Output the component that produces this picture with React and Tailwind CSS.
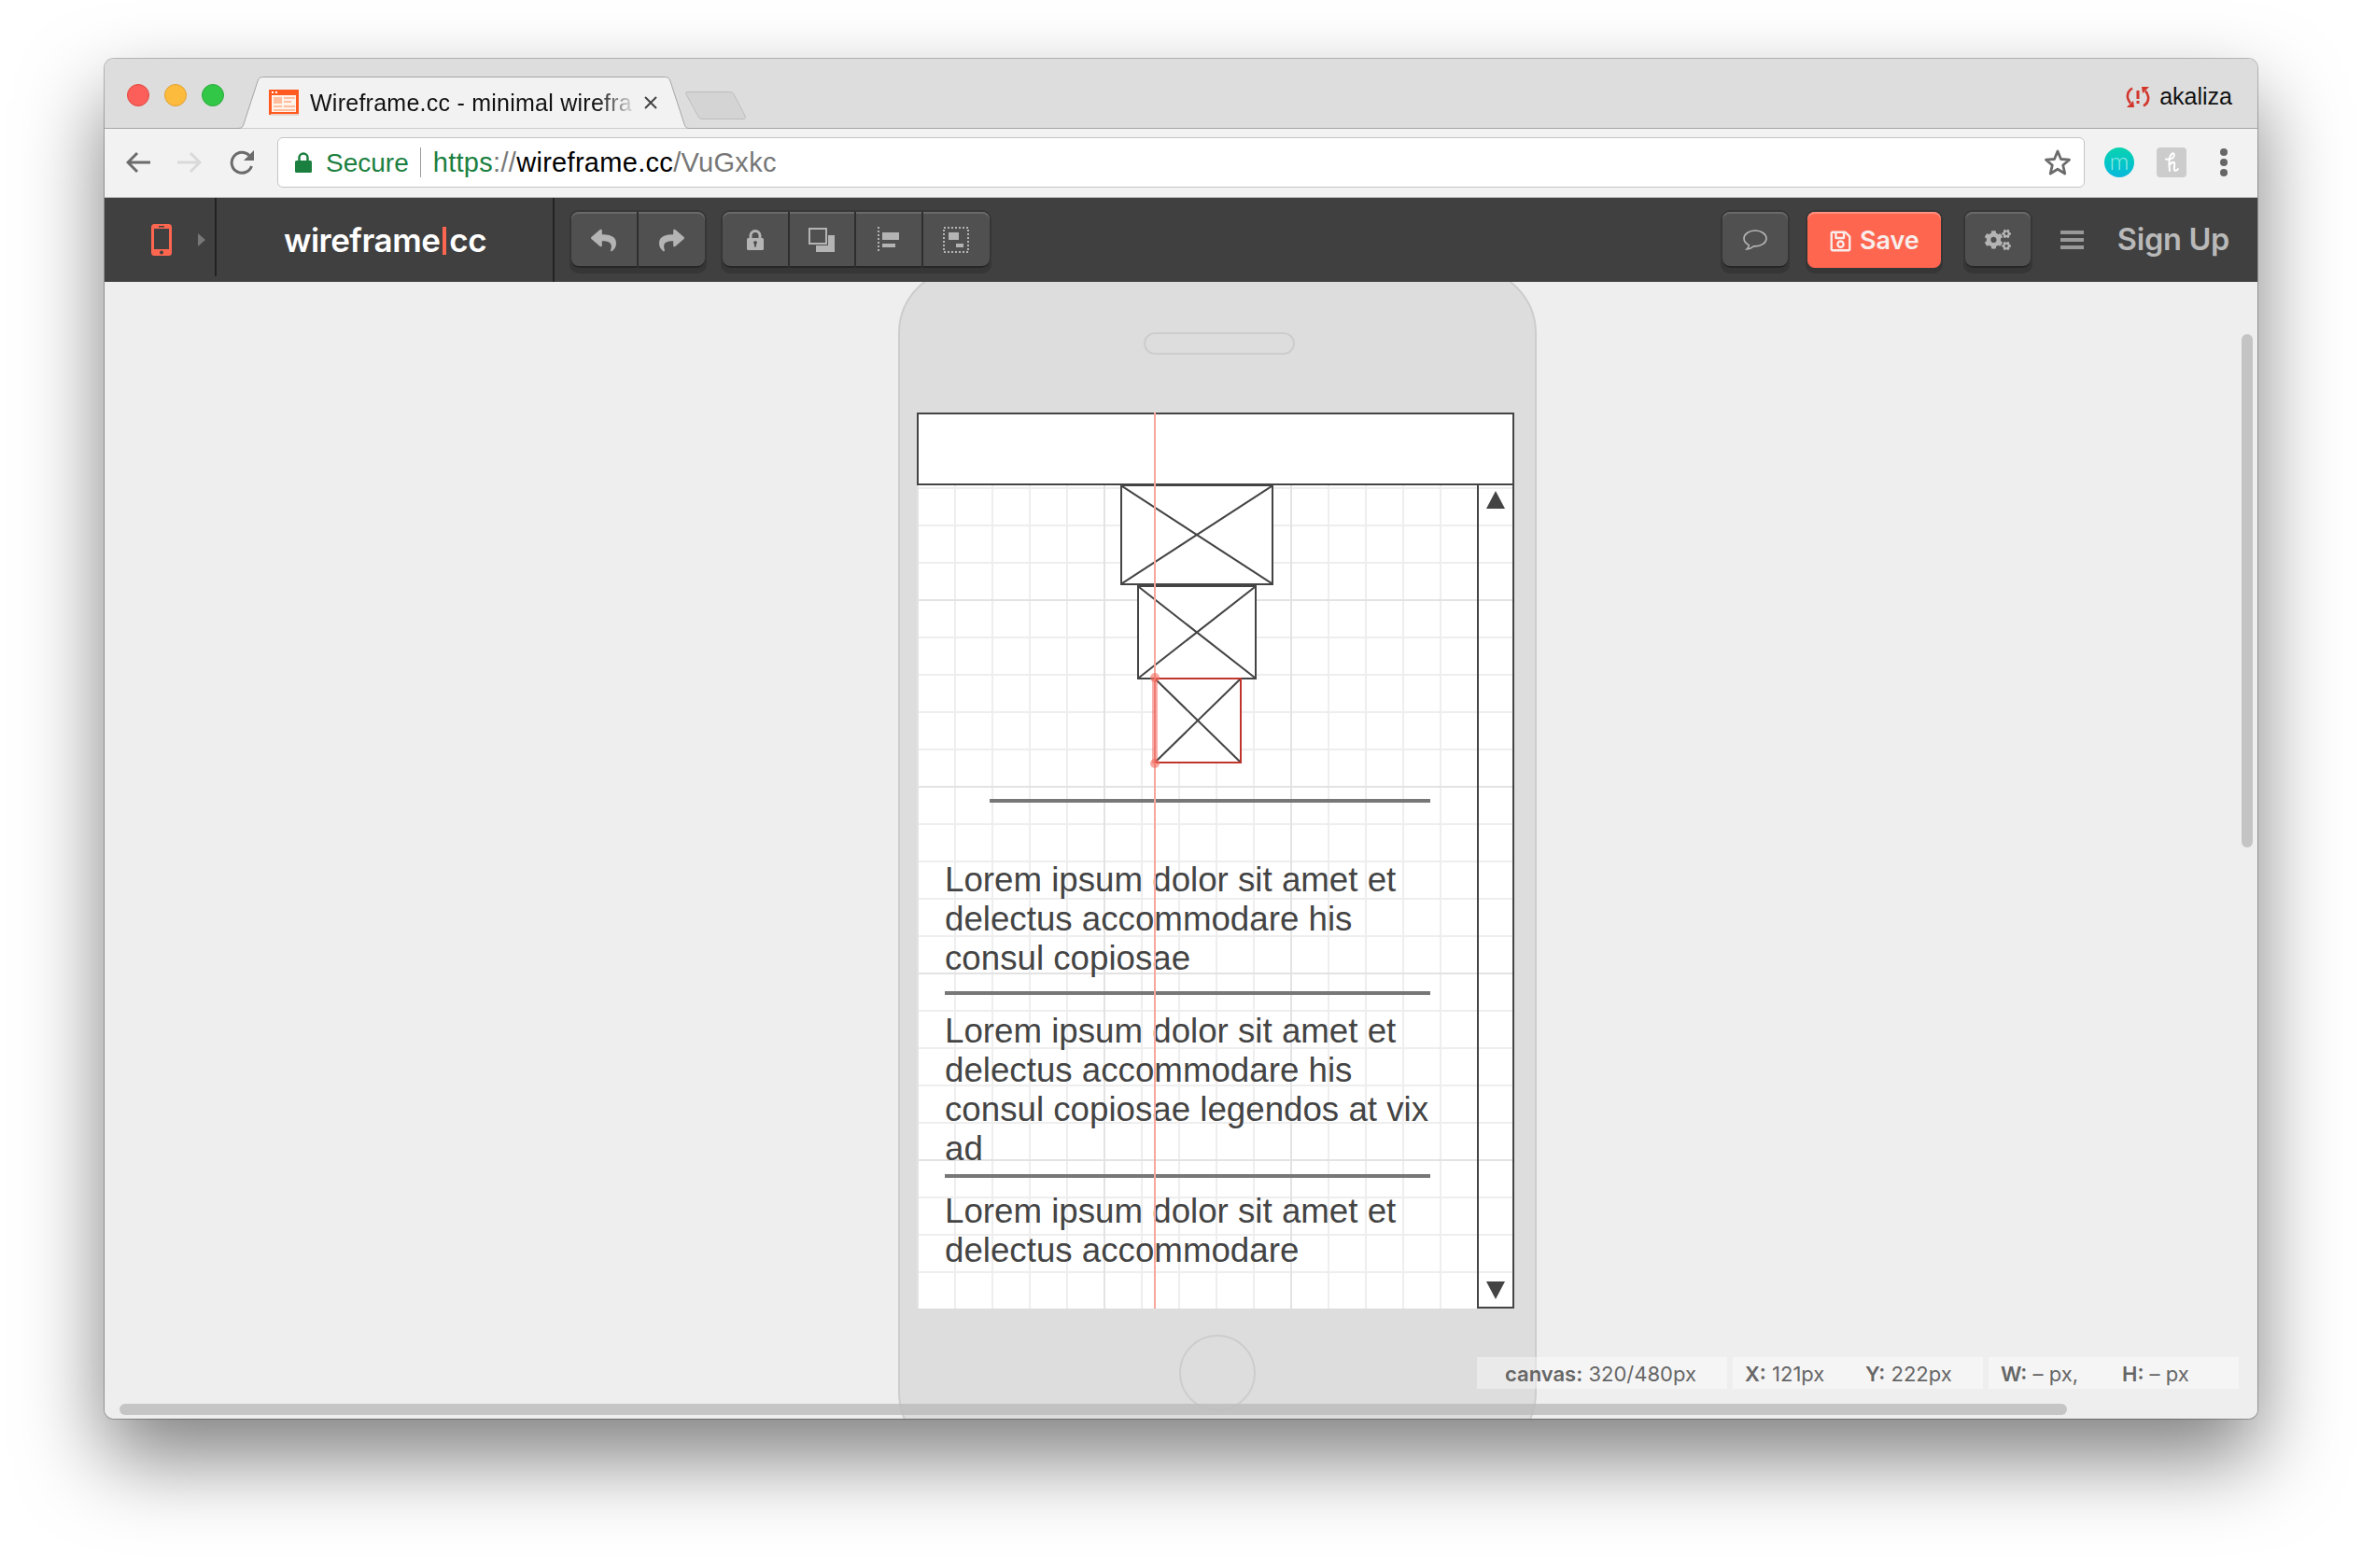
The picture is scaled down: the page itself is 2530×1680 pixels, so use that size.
import { FaReply, FaShare, FaCogs, FaRegSave } from "react-icons/fa";

const TrafficLights = () => (
  <div className="flex gap-4 ml-6 mt-[27px] self-start">
    <div className="w-6 h-6 rounded-full bg-[#fc5f5a] border border-[#e2463f]" />
    <div className="w-6 h-6 rounded-full bg-[#fdbb3e] border border-[#e1a02f]" />
    <div className="w-6 h-6 rounded-full bg-[#33c748] border border-[#2aac3b]" />
  </div>
);

const Favicon = () => (
  <svg width="32" height="28" viewBox="0 0 32 28" className="shrink-0">
    <rect x="2" y="2" width="28" height="23" fill="#fff3ea" />
    <rect x="1.5" y="1.5" width="29" height="24" fill="none" stroke="#ff5a1f" strokeWidth="3" />
    <rect x="0" y="0" width="32" height="6" fill="#ff5a1f" />
    <rect x="3" y="2" width="2" height="2" fill="#fff" />
    <rect x="7" y="2" width="2" height="2" fill="#fff" />
    <rect x="5" y="8" width="9" height="7" fill="#ffbf9f" />
    <rect x="16" y="8" width="12" height="2" fill="#ffbf9f" />
    <rect x="16" y="12" width="8" height="2" fill="#ffbf9f" />
    <rect x="5" y="17" width="9" height="2" fill="#ffbf9f" />
    <rect x="16" y="17" width="12" height="2" fill="#ffbf9f" />
    <rect x="5" y="21" width="23" height="2" fill="#ffbf9f" />
    <rect x="2" y="26" width="30" height="2" fill="#e6d5cb" />
  </svg>
);

const Tab = () => (
  <div className="relative w-[484px] h-[56px] ml-[15px] self-end -mb-px shrink-0">
    <svg className="absolute inset-0" width="484" height="56" viewBox="0 0 484 56">
      <path d="M0 55.5 C4 55.5 5 54 6 51 L21 5 C22 2 23 0.5 28 0.5 L456 0.5 C461 0.5 462 2 463 5 L478 51 C479 54 480 55.5 484 55.5 Z" fill="#f2f2f2" />
      <path d="M0 55.5 C4 55.5 5 54 6 51 L21 5 C22 2 23 0.5 28 0.5 L456 0.5 C461 0.5 462 2 463 5 L478 51 C479 54 480 55.5 484 55.5" fill="none" stroke="#a5a5a5" />
    </svg>
    <div className="relative flex items-center h-full pl-[33px]">
      <Favicon />
      <div className="ml-[12px] w-[350px] whitespace-nowrap text-[25px] leading-[32px] tracking-[0.25px] text-[#111] [mask-image:linear-gradient(to_right,black_88%,transparent)]">
        Wireframe.cc - minimal wirefra
      </div>
      <svg width="16" height="16" viewBox="0 0 16 16" className="ml-[7px] shrink-0">
        <path d="M2 2 L14 14 M14 2 L2 14" stroke="#444" strokeWidth="2" />
      </svg>
    </div>
  </div>
);

const NewTab = () => (
  <svg width="66" height="32" viewBox="0 0 66 32" className="self-start mt-[34px] -ml-[5px] shrink-0">
    <path d="M2 1.5 L48 1.5 Q51 1.5 52 4 L64 27 Q65.5 30.5 62 30.5 L18 30.5 Q15 30.5 14 28 L1 4 Q0 1.5 2 1.5 Z" fill="#d4d4d4" stroke="#bdbdbd" />
  </svg>
);

const SyncIcon = () => (
  <svg width="26" height="24" viewBox="0 0 26 24" fill="none" className="shrink-0">
    <path d="M7 2.5 C3 5 1.500 9 2 12.500 C2.500 15 3.500 17 5 18.500" stroke="#d2362c" strokeWidth="2.600" />
    <path d="M1 23 L9 23 L8 16 Z" fill="#d2362c" />
    <path d="M19 21.500 C23 19 24.500 15 24 11.500 C23.500 9 22.500 7 21 5.500" stroke="#d2362c" strokeWidth="2.600" />
    <path d="M25 1 L17 1 L18 8 Z" fill="#d2362c" />
    <rect x="11.500" y="5" width="3" height="9" fill="#d2362c" />
    <rect x="11.500" y="16" width="3" height="3" fill="#d2362c" />
  </svg>
);

const TitleBar = () => (
  <div className="flex h-[75px] shrink-0 bg-[#dddddd] border-b border-[#a5a5a5]">
    <TrafficLights />
    <Tab />
    <NewTab />
    <div className="ml-auto flex items-center gap-[10px] pr-[27px] pt-[7px]">
      <SyncIcon />
      <span className="text-[25px] text-[#111]">akaliza</span>
    </div>
  </div>
);

const NavIcons = () => (
  <div className="flex items-center gap-[29px] ml-[23px]">
    <svg width="26" height="24" viewBox="0 0 26 24" fill="none" stroke="#6b6b6b" strokeWidth="3">
      <path d="M26 12 H3 M12 2 L2 12 L12 22" />
    </svg>
    <svg width="26" height="24" viewBox="0 0 26 24" fill="none" stroke="#d9d9d9" strokeWidth="3">
      <path d="M0 12 H23 M14 2 L24 12 L14 22" />
    </svg>
    <svg width="28" height="28" viewBox="0 0 28 28" fill="none" className="ml-[1px]">
      <path d="M23.500 18 A11 11 0 1 1 21 6.500" stroke="#6b6b6b" strokeWidth="3" />
      <path d="M26 1 V12 H15 Z" fill="#6b6b6b" />
    </svg>
  </div>
);

const AddressBar = () => (
  <div className="flex items-center ml-[23px] w-[1936px] h-[54px] bg-white border border-[#c4c4c4] rounded-[6px] pl-[18px] pr-[13px]">
    <svg width="18" height="22" viewBox="0 0 18 22" className="shrink-0">
      <path d="M4.500 10 V6 A4.500 4.500 0 0 1 13.500 6 V10" fill="none" stroke="#1b7f3f" strokeWidth="2.500" />
      <rect x="0" y="9" width="18" height="13" rx="1.500" fill="#1b7f3f" />
    </svg>
    <span className="ml-[15px] pt-[1px] text-[28px] text-[#1b7f3f]">Secure</span>
    <div className="ml-[12px] w-px h-[32px] bg-[#9a9a9a]" />
    <span className="ml-[13px] pt-[1px] text-[29px] tracking-[0.3px] text-[#777] whitespace-nowrap">
      <span className="text-[#1b7f3f]">https</span>://<span className="text-black">wireframe.cc</span>/VuGxkc
    </span>
    <svg width="30" height="30" viewBox="0 0 30 30" className="ml-auto" fill="none">
      <path d="M15 3 L18.500 11.500 L27.500 12.200 L20.700 18 L22.800 27 L15 22.200 L7.200 27 L9.300 18 L2.500 12.200 L11.500 11.500 Z" stroke="#6b6b6b" strokeWidth="2.800" strokeLinejoin="round" />
    </svg>
  </div>
);

const Extensions = () => (
  <div className="flex items-center">
    <div className="ml-[21px] w-8 h-8 rounded-full bg-gradient-to-b from-[#0cd3ae] to-[#0bb8dc] flex items-center justify-center text-[26px] leading-none text-[#8fe9e4] font-['Lato',sans-serif] font-light pb-[4px]">
      m
    </div>
    <div className="ml-[24px] w-8 h-8 rounded-[4px] bg-[#cccccc] flex items-center justify-center">
      <svg width="18" height="24" viewBox="0 0 18 24" fill="none" stroke="#fff" strokeWidth="2" strokeLinecap="round">
        <path d="M7 21 C6 14 6 6 9 3 C11 1.500 12.500 3 11.500 5.500 C10.500 8 7 9 3 8.500 M6.800 15 C8 12.500 11 11 12 12.500 C13 14.500 11 18 12 20 C12.500 21.500 14.500 21 16 19" />
      </svg>
    </div>
    <div className="ml-[36px] flex flex-col gap-[3px]">
      <div className="w-2 h-2 rounded-full bg-[#666]" />
      <div className="w-2 h-2 rounded-full bg-[#666]" />
      <div className="w-2 h-2 rounded-full bg-[#666]" />
    </div>
  </div>
);

const BrowserToolbar = () => (
  <div className="flex items-center h-[74px] shrink-0 bg-[#f2f2f2] border-b border-[#bdbdbd] pb-px">
    <NavIcons />
    <AddressBar />
    <Extensions />
  </div>
);

const raised =
  "bg-[#505050] rounded-[8px] shadow-[inset_0_2px_0_#696969,inset_0_-2px_0_#262626,0_0_0_2px_#363636,0_4px_0_2px_#363636]";

const Cell = ({ children, last }) => (
  <div className={`w-[71.5px] flex items-center justify-center ${last ? "" : "border-r-2 border-[#2e2e2e]"}`}>
    {children}
  </div>
);

const LockIcon = () => (
  <svg width="18" height="22" viewBox="0 0 18 22">
    <path d="M4 10 V6.500 A5 5 0 0 1 14 6.500 V10" fill="none" stroke="#b4b4b4" strokeWidth="3" />
    <path fillRule="evenodd" d="M1.500 9 H16.500 Q18 9 18 10.500 V20.500 Q18 22 16.500 22 H1.500 Q0 22 0 20.500 V10.500 Q0 9 1.500 9 Z M9 12 A2 2 0 0 0 8 15.700 V18.500 H10 V15.700 A2 2 0 0 0 9 12 Z" fill="#b4b4b4" />
  </svg>
);

const ArrangeIcon = () => (
  <svg width="28" height="26" viewBox="0 0 28 26">
    <path d="M21 8 H28 V26 H8 V19 H21 Z" fill="#b4b4b4" />
    <rect x="1" y="1" width="18" height="16" fill="none" stroke="#b4b4b4" strokeWidth="2" />
  </svg>
);

const AlignIcon = () => (
  <svg width="23" height="28" viewBox="0 0 23 28">
    <path d="M1 0 V28" stroke="#b4b4b4" strokeWidth="2" strokeDasharray="2 2" />
    <rect x="5" y="6" width="18" height="8" fill="#b4b4b4" />
    <rect x="5" y="18" width="14" height="4" fill="#b4b4b4" />
  </svg>
);

const GroupIcon = () => (
  <svg width="28" height="28" viewBox="0 0 28 28">
    <rect x="1" y="1" width="26" height="26" fill="none" stroke="#b4b4b4" strokeWidth="2" strokeDasharray="2 2" />
    <rect x="6" y="6" width="11" height="8" fill="#b4b4b4" />
    <rect x="14" y="18" width="8" height="4" fill="#b4b4b4" />
  </svg>
);

const PhoneIcon = () => (
  <svg width="22" height="34" viewBox="0 0 22 34" className="shrink-0">
    <rect width="22" height="34" rx="3.500" fill="#ff6650" />
    <rect x="3" y="5" width="16" height="22" fill="#404040" />
    <rect x="8" y="2" width="6" height="1.500" fill="#404040" />
    <circle cx="11" cy="30.500" r="2" fill="#404040" />
  </svg>
);

const CommentIcon = () => (
  <svg width="26" height="23" viewBox="0 0 26 23" fill="none" stroke="#b4b4b4" strokeWidth="1.600">
    <path d="M13 1 C6.400 1 1 4.800 1 9.500 C1 12.500 3.200 15.100 6.400 16.600 C6.100 18.200 5.100 19.800 4 21 C7 20.600 9.600 19.400 11.400 17.800 C11.900 17.900 12.500 17.900 13 17.900 C19.600 17.900 25 14.100 25 9.500 C25 4.800 19.600 1 13 1 Z" />
  </svg>
);

const AppBar = () => (
  <div className="flex items-center h-[90px] shrink-0 bg-[#404040]">
    <div className="flex items-center w-[120px] h-[84px] self-start border-r-2 border-[#222] pl-[50px] pt-[5px]">
      <PhoneIcon />
      <svg width="8" height="14" viewBox="0 0 8 14" className="ml-[28px]">
        <path d="M0 0 L8 7 L0 14 Z" fill="#777" />
      </svg>
    </div>
    <div className="flex items-center w-[362px] h-full border-r-2 border-[#222] pl-[72px] font-['Inter',sans-serif] font-semibold text-[35px] leading-none text-white tracking-[-0.5px]">
      <span>wireframe</span>
      <span className="w-[4px] h-[30px] shrink-0 bg-[#ff6650] mx-[3px] mt-[2px]" />
      <span>cc</span>
    </div>
    <div className={`flex h-[60px] ml-[18px] ${raised}`}>
      <Cell><FaReply size={27} color="#b4b4b4" /></Cell>
      <Cell last><FaShare size={27} color="#b4b4b4" /></Cell>
    </div>
    <div className={`flex h-[60px] ml-[19px] ${raised}`}>
      <Cell><LockIcon /></Cell>
      <Cell><ArrangeIcon /></Cell>
      <Cell><AlignIcon /></Cell>
      <Cell last><GroupIcon /></Cell>
    </div>
    <div className="ml-auto flex items-center pr-[30px] font-['Inter',sans-serif]">
      <div className={`flex items-center justify-center w-[70px] h-[60px] ${raised}`}>
        <CommentIcon />
      </div>
      <div className="flex items-center justify-center gap-[8px] w-[143px] h-[60px] ml-[21px] pt-[2px] rounded-[8px] bg-[#ff6650] text-[#f8eeec] text-[27px] font-semibold shadow-[inset_0_2px_0_#ff9180,0_0_0_2px_#363636,0_4px_0_2px_#363636]">
        <FaRegSave size={25} />
        <span>Save</span>
      </div>
      <div className={`flex items-center justify-center w-[70px] h-[60px] ml-[26px] ${raised}`}>
        <FaCogs size={28} color="#b4b4b4" />
      </div>
      <div className="flex flex-col gap-[4px] w-[25px] ml-[32px]">
        <div className="h-[4px] bg-[#999]" />
        <div className="h-[4px] bg-[#999]" />
        <div className="h-[4px] bg-[#999]" />
      </div>
      <span className="ml-[36px] text-[32.500px] leading-none font-semibold text-[#b9b9b9] tracking-[-0.3px]">Sign Up</span>
    </div>
  </div>
);

const Cross = () => (
  <svg className="absolute inset-0 w-full h-full" viewBox="0 0 100 100" preserveAspectRatio="none">
    <line x1="0" y1="0" x2="100" y2="100" stroke="#444" strokeWidth="2" vectorEffect="non-scaling-stroke" />
    <line x1="100" y1="0" x2="0" y2="100" stroke="#444" strokeWidth="2" vectorEffect="non-scaling-stroke" />
  </svg>
);

const WireText = ({ className, children }) => (
  <p className={`absolute left-[30px] w-[530px] text-[36.700px] leading-[42px] text-[#444] ${className}`}>{children}</p>
);

const Canvas = () => (
  <div className="relative w-[640px] h-[960px] ml-[18px] mt-[62px] bg-white bg-[linear-gradient(to_right,#e3e3e3_2px,transparent_2px),linear-gradient(to_bottom,#e3e3e3_2px,transparent_2px),linear-gradient(to_right,#eeeeee_2px,transparent_2px),linear-gradient(to_bottom,#eeeeee_2px,transparent_2px)] bg-[size:200px_200px,200px_200px,40px_40px,40px_40px]">
    <div className="absolute left-0 top-0 w-[640px] h-[78px] bg-white border-2 border-[#444]" />

    <div className="absolute left-[218px] top-[77px] w-[164px] h-[108px] bg-white border-2 border-[#444]"><Cross /></div>
    <div className="absolute left-[236px] top-[185px] w-[128px] h-[101px] bg-white border-2 border-[#444]"><Cross /></div>
    <div className="absolute left-[254px] top-[284px] w-[94px] h-[92px] bg-white border-2 border-[#c0352c]"><Cross /></div>

    <div className="absolute left-[78px] top-[414px] w-[472px] h-[4px] bg-[#777]" />
    <WireText className="top-[480px]">Lorem ipsum dolor sit amet et delectus accommodare his consul copiosae</WireText>
    <div className="absolute left-[30px] top-[620px] w-[520px] h-[4px] bg-[#777]" />
    <WireText className="top-[642px]">Lorem ipsum dolor sit amet et delectus accommodare his consul copiosae legendos at vix ad</WireText>
    <div className="absolute left-[30px] top-[816px] w-[520px] h-[4px] bg-[#777]" />
    <WireText className="top-[835px]">Lorem ipsum dolor sit amet et delectus accommodare</WireText>

    <div className="absolute left-[600px] top-[76px] w-[40px] h-[884px] border-2 border-[#444] flex flex-col justify-between items-center pt-[6px] pb-[8px]">
      <svg width="20" height="19" viewBox="0 0 20 19"><path d="M10 0 L20 19 L0 19 Z" fill="#444" /></svg>
      <svg width="20" height="19" viewBox="0 0 20 19"><path d="M0 0 L20 0 L10 19 Z" fill="#444" /></svg>
    </div>

    <div className="absolute left-[254px] top-0 w-[2px] h-[960px] bg-[#f7a79d]" />
    <div className="absolute left-[252px] top-[284px] w-[6px] h-[92px] bg-[#e8382c]/40" />
    <div className="absolute left-[250px] top-[279px] w-[10px] h-[10px] rounded-full bg-[#f26a5e]/60" />
    <div className="absolute left-[250px] top-[371px] w-[10px] h-[10px] rounded-full bg-[#f26a5e]/60" />
  </div>
);

const Phone = () => (
  <div className="flex flex-col w-[684px] h-[1275px] ml-[850px] -mt-[15px] shrink-0 rounded-[70px] bg-[#dddddd] border-2 border-[#cdcdcd]">
    <div className="w-[162px] h-[24px] ml-[261px] mt-[67px] shrink-0 rounded-full border-2 border-[#cdcdcd]" />
    <Canvas />
    <div className="w-[82px] h-[82px] ml-[299px] mt-[28px] shrink-0 rounded-full border-2 border-[#cdcdcd]" />
  </div>
);

const StatusBar = () => (
  <div className="absolute left-[1470px] top-[1152px] flex gap-[6px] text-[22px] leading-[34px] text-[#666] font-['Inter',sans-serif] whitespace-nowrap">
    <div className="w-[268px] h-[34px] bg-white/40 pl-[30px] pt-[1px]"><b className="font-semibold">canvas:</b> 320/480px</div>
    <div className="flex w-[268px] h-[34px] bg-white/40 pl-[13px] pt-[1px]">
      <span className="w-[129px]"><b className="font-semibold">X:</b> 121px</span>
      <span><b className="font-semibold">Y:</b> 222px</span>
    </div>
    <div className="flex w-[268px] h-[34px] bg-white/40 pl-[13px] pt-[1px]">
      <span className="w-[130px]"><b className="font-semibold">W:</b> – px,</span>
      <span><b className="font-semibold">H:</b> – px</span>
    </div>
  </div>
);

const Workspace = () => (
  <div className="relative flex-1 overflow-hidden bg-[#eeeeee]">
    <Phone />
    <StatusBar />
    <div className="absolute left-[2289px] top-[56px] w-[12px] h-[550px] rounded-full bg-[#c4c4c4]" />
    <div className="absolute left-[16px] top-[1202px] w-[2086px] h-[12px] rounded-full bg-[#bdbdbd]/85" />
  </div>
);

export default function App() {
  return (
    <div className="w-[2530px] h-[1680px] overflow-hidden bg-white pt-[63px] pl-[112px] font-['Liberation_Sans',Arial,sans-serif]">
      <div className="flex flex-col w-[2306px] h-[1457px] rounded-[10px] overflow-hidden shadow-[0_42px_88px_rgba(0,0,0,0.5),0_0_0_1px_rgba(0,0,0,0.25)]">
        <TitleBar />
        <BrowserToolbar />
        <AppBar />
        <Workspace />
      </div>
    </div>
  );
}
